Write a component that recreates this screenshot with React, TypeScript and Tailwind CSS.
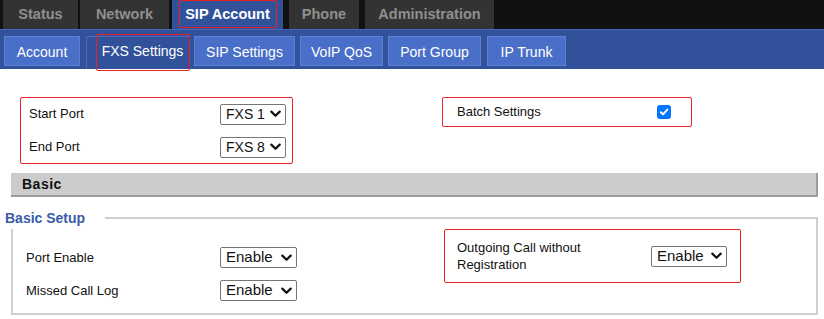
import React from 'react'

const font = { fontFamily: '"Liberation Sans", Arial, sans-serif' }

function Chevron() {
  return (
    <svg width="11" height="8" viewBox="0 0 11 8" className="shrink-0">
      <path d="M1.3 1.6 L5.5 5.8 L9.7 1.6" fill="none" stroke="#111" strokeWidth="2.2" strokeLinecap="round" strokeLinejoin="round" />
    </svg>
  )
}

function FakeSelect({ value, w, size = 'text-[15px]' }: { value: string; w: string; size?: string }) {
  return (
    <div className={`${w} ${size} h-[21px] flex items-center justify-between gap-[2px] border border-[#767676] rounded-[2px] bg-white pl-[5px] pr-[4px] text-[#111] whitespace-nowrap`}>
      <span>{value}</span>
      <Chevron />
    </div>
  )
}

const topTabs = [
  { label: 'Status', w: 'w-[75px]', ml: 'ml-[3px]' },
  { label: 'Network', w: 'w-[89px]', ml: 'ml-[2px]' },
  { label: 'SIP Account', w: 'w-[111px]', ml: 'ml-[3px]', active: true },
  { label: 'Phone', w: 'w-[70px]', ml: 'ml-[6px]' },
  { label: 'Administration', w: 'w-[129px]', ml: 'ml-[6px]' },
]

const subTabs = [
  { label: 'Account', w: 'w-[76px]', ml: 'ml-[4px]' },
  { label: 'FXS Settings', w: 'w-[104px]', ml: 'ml-[6px]', active: true },
  { label: 'SIP Settings', w: 'w-[101px]', ml: 'ml-[4px]' },
  { label: 'VoIP QoS', w: 'w-[83px]', ml: 'ml-[5px]' },
  { label: 'Port Group', w: 'w-[93px]', ml: 'ml-[5px]' },
  { label: 'IP Trunk', w: 'w-[79px]', ml: 'ml-[6px]' },
]

export default function App() {
  return (
    <div className="w-[824px] h-[319px] bg-white overflow-hidden" style={font}>
      {/* top navigation */}
      <div className="h-[29px] bg-[#111111] flex">
        {topTabs.map((t) => (
          <div
            key={t.label}
            className={`${t.w} ${t.ml} h-full relative flex items-center justify-center pt-[1px] text-[14.5px] font-bold ${
              t.active ? 'bg-[#31529b] text-white' : 'bg-[#333333] text-[#8f8f8f]'
            }`}
          >
            {t.active && <div className="absolute left-[7px] right-[6px] top-0 bottom-[1px] border-[1.5px] border-[#e8201f] rounded-[2px]" />}
            <span className="relative">{t.label}</span>
          </div>
        ))}
      </div>

      {/* sub navigation */}
      <div className="h-[40px] bg-[#31529b] border-t border-[#4468b8] flex items-end">
        {subTabs.map((t) =>
          t.active ? (
            <div key={t.label} className={`${t.w} ${t.ml} h-[33px] relative border-l border-t border-[#4a6bbf] bg-[#31529b] flex items-center justify-center text-[14px] text-white`}>
              <div className="absolute left-[9px] right-0 top-[-3px] bottom-[-2px] border border-[#e8201f] rounded-[2px]" />
              <span className="relative pl-[8px] -mt-[3px]">{t.label}</span>
            </div>
          ) : (
            <div key={t.label} className={`${t.w} ${t.ml} h-[30px] mb-[3px] pt-[3px] border border-[#5c80d6] bg-[#4a6fc8] flex items-center justify-center text-[14px] text-white`}>
              {t.label}
            </div>
          )
        )}
      </div>

      {/* port range + batch */}
      <div className="flex pt-[28px]">
        <div className="ml-[20px] w-[273px] h-[67px] border border-[#ee2222] rounded-[2px] flex flex-col justify-center gap-[12px] pl-[8px] pr-[6px] text-[13px] text-[#111]">
          <div className="flex items-center justify-between">
            <span>Start Port</span>
            <FakeSelect value="FXS 1" w="w-[66px]" size="text-[14px]" />
          </div>
          <div className="flex items-center justify-between">
            <span>End Port</span>
            <FakeSelect value="FXS 8" w="w-[66px]" size="text-[14px]" />
          </div>
        </div>
        <div className="ml-[149px] w-[250px] h-[30px] border border-[#ee2222] rounded-[2px] flex items-center pl-[14px] text-[13px] text-[#111]">
          <span className="w-[200px]">Batch Settings</span>
          <div className="w-[14px] h-[14px] rounded-[3px] bg-[#0075ff] flex items-center justify-center">
            <svg width="10" height="10" viewBox="0 0 10 10">
              <path d="M1.8 5.2 L4 7.4 L8.3 2.6" fill="none" stroke="white" strokeWidth="2" strokeLinecap="round" strokeLinejoin="round" />
            </svg>
          </div>
        </div>
      </div>

      {/* Basic header */}
      <div className="mt-[9px] ml-[11px] w-[807px] h-[24px] bg-[#cccccc] border-b-2 border-r-2 border-[#9c9c9c] flex items-center pl-[11px] text-[14px] font-bold text-[#111] tracking-[0.5px]">
        Basic
      </div>

      {/* Basic Setup fieldset */}
      <div className="relative mt-[20px] ml-[11px] w-[807px] h-[98px] border-2 border-[#d0d0d0]">
        <div className="absolute -top-[11px] -left-[8px] bg-white pr-[20px] text-[14px] font-bold text-[#3a5ba8]">Basic Setup</div>
        <div className="flex pt-[10px]">
          <div className="w-[284px] flex flex-col gap-[12px] pt-[18px] pl-[13px] text-[13px] text-[#111]">
            <div className="flex items-center justify-between">
              <span>Port Enable</span>
              <FakeSelect value="Enable" w="w-[77px]" />
            </div>
            <div className="flex items-center justify-between">
              <span>Missed Call Log</span>
              <FakeSelect value="Enable" w="w-[77px]" />
            </div>
          </div>
          <div className="ml-[147px] w-[297px] h-[54px] border border-[#ee2222] rounded-[2px] flex items-center justify-between pl-[12px] pr-[13px] text-[13px] text-[#111]">
            <span className="leading-[17px]">
              Outgoing Call without
              <br />
              Registration
            </span>
            <FakeSelect value="Enable" w="w-[76px]" />
          </div>
        </div>
      </div>
    </div>
  )
}
